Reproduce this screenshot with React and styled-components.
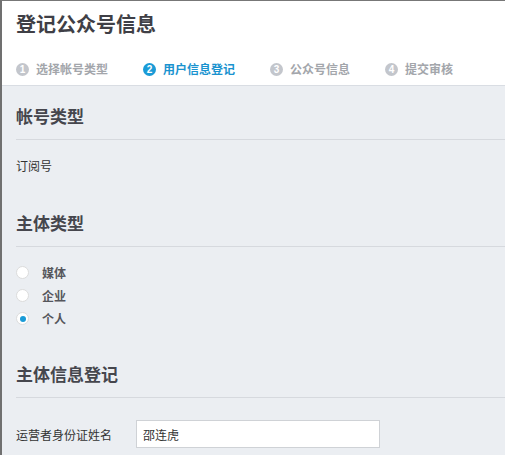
import React, { useState } from 'react';
import styled, { createGlobalStyle } from 'styled-components';

const GlobalStyle = createGlobalStyle`
  html, body {
    margin: 0;
    padding: 0;
    background: #ebeef2;
  }
  body {
    font-family: "Noto Sans CJK SC", "Microsoft YaHei", sans-serif;
  }
`;

const steps = ['选择帐号类型', '用户信息登记', '公众号信息', '提交审核'];
const subjects = ['媒体', '企业', '个人'];

const App = () => {
  const [subject, setSubject] = useState('个人');
  const [name, setName] = useState('邵连虎');

  return (
    <Page>
      <GlobalStyle />
      <Header>
        <Title>登记公众号信息</Title>
        <StepBar>
          {steps.map((s, i) => (
            <Step key={s} active={i === 1}>
              <StepNum active={i === 1}>{i + 1}</StepNum>
              {s}
            </Step>
          ))}
        </StepBar>
      </Header>

      <Body>
        <SectionTitle first>帐号类型</SectionTitle>
        <Divider />
        <PlainText>订阅号</PlainText>

        <SectionTitle>主体类型</SectionTitle>
        <Divider />
        <RadioList>
          {subjects.map((s) => (
            <RadioRow key={s} onClick={() => setSubject(s)}>
              <RadioDot checked={subject === s} />
              {s}
            </RadioRow>
          ))}
        </RadioList>

        <SectionTitle gap={32}>主体信息登记</SectionTitle>
        <Divider />
        <FormRow>
          <FieldLabel>运营者身份证姓名</FieldLabel>
          <TextInput value={name} onChange={(e) => setName(e.target.value)} />
        </FormRow>
      </Body>
    </Page>
  );
};

export default App;

const Page = styled.div`
  width: 505px;
  height: 455px;
  box-sizing: border-box;
  border-top: 1px solid #777;
  border-left: 2px solid #707070;
  background: #ebeef2;
  overflow: hidden;
`;

const Header = styled.div`
  background: #fff;
  padding: 9px 0 6px 14px;
  border-bottom: 1px solid #d9dde3;
`;

const Title = styled.h1`
  margin: 0;
  font-size: 20px;
  line-height: 28px;
  font-weight: bold;
  color: #3f3f46;
`;

const StepBar = styled.div`
  display: flex;
  gap: 35px;
  margin-top: 21px;
`;

const Step = styled.div`
  display: flex;
  align-items: center;
  gap: 7px;
  font-size: 12px;
  line-height: 20px;
  font-weight: bold;
  color: ${(p) => (p.active ? '#1a93cf' : '#a3a6ab')};
`;

const StepNum = styled.span`
  width: 13px;
  height: 13px;
  border-radius: 50%;
  background: ${(p) => (p.active ? '#1a9bd7' : '#c3c6cc')};
  color: #fff;
  font-size: 10px;
  line-height: 13px;
  text-align: center;
  font-family: "Liberation Sans", Arial, sans-serif;
  font-weight: bold;
`;

const Body = styled.div`
  padding-left: 14px;
`;

const SectionTitle = styled.h2`
  margin: ${(p) => (p.first ? 18 : p.gap || 36)}px 0 0;
  font-size: 17px;
  line-height: 24px;
  font-weight: bold;
  color: #45464d;
`;

const Divider = styled.div`
  height: 1px;
  background: #d6d9de;
  margin-top: 11px;
`;

const PlainText = styled.div`
  margin-top: 17px;
  font-size: 12px;
  line-height: 18px;
  color: #333;
`;

const RadioList = styled.div`
  margin-top: 14px;
`;

const RadioRow = styled.label`
  display: flex;
  align-items: center;
  gap: 13px;
  height: 23px;
  font-size: 12px;
  font-weight: bold;
  color: #55565c;
  cursor: pointer;
`;

const RadioDot = styled.span`
  position: relative;
  width: 11px;
  height: 11px;
  border-radius: 50%;
  background: #fff;
  border: 1px solid #dcdcdc;

  &::after {
    content: '';
    display: ${(p) => (p.checked ? 'block' : 'none')};
    position: absolute;
    left: 2.5px;
    top: 2.5px;
    width: 6px;
    height: 6px;
    border-radius: 50%;
    background: #1a9bd7;
  }
`;

const FormRow = styled.div`
  display: flex;
  align-items: center;
  margin-top: 22px;
`;

const FieldLabel = styled.div`
  width: 120px;
  font-size: 12px;
  color: #333;
`;

const TextInput = styled.input`
  box-sizing: border-box;
  width: 244px;
  height: 28px;
  border: 1px solid #cfd2d6;
  background: #fff;
  padding: 0 6px;
  font-family: "Noto Sans CJK SC", sans-serif;
  font-size: 12px;
  color: #333;
  outline: none;
`;
